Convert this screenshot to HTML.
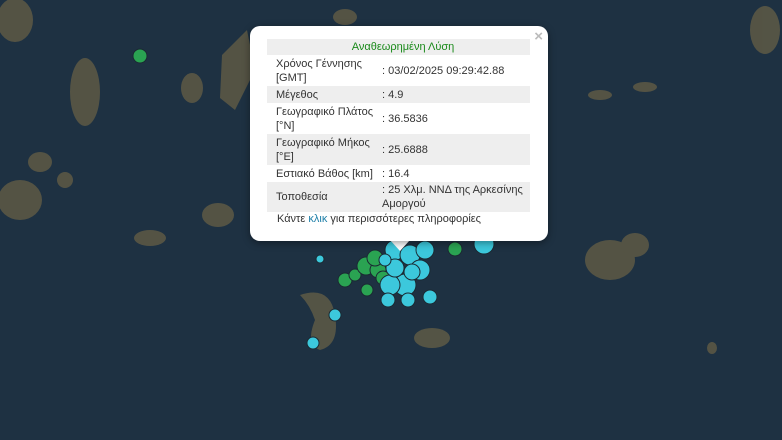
<!DOCTYPE html>
<html><head><meta charset="utf-8"><style>
body{margin:0;width:782px;height:440px;overflow:hidden;background:#1e3142;font-family:"Liberation Sans",sans-serif;position:relative}
svg{position:absolute;left:0;top:0}
.pop{position:absolute;left:250px;top:26px;width:298px;height:215px;background:#fff;border-radius:10px;box-shadow:0 2px 8px rgba(0,0,0,.4)}
.tip{position:absolute;left:390px;top:240px;width:0;height:0;border-left:10px solid transparent;border-right:10px solid transparent;border-top:11px solid #fff}
.x{position:absolute;right:5px;top:2px;color:#bbb;font-size:15px;font-weight:bold}
table{position:absolute;left:17px;top:13px;width:263px;border-collapse:collapse;font-size:11px;color:#333}
td{padding:0 0 0 9px;line-height:14px;vertical-align:middle}
td:first-child{width:98px}
td+td{padding-left:8px}
tr.g{background:#eee}
.h td{color:#1a8a1a;text-align:center;height:16px}
.lnk{position:absolute;left:27px;top:187px;font-size:11px;color:#333}
.lnk span{color:#1e7fa8}
</style></head><body>
<svg width="782" height="440">
<g fill="#5e5a45" opacity=".85">
<ellipse cx="85" cy="92" rx="15" ry="34"/><path d="M222 55 l25-25 l8 40 l-20 40 l-15-12z"/>
<ellipse cx="192" cy="88" rx="11" ry="15"/><ellipse cx="345" cy="17" rx="12" ry="8"/>
<ellipse cx="15" cy="20" rx="18" ry="22"/><ellipse cx="40" cy="162" rx="12" ry="10"/>
<ellipse cx="20" cy="200" rx="22" ry="20"/><ellipse cx="65" cy="180" rx="8" ry="8"/>
<ellipse cx="218" cy="215" rx="16" ry="12"/><ellipse cx="150" cy="238" rx="16" ry="8"/>
<ellipse cx="610" cy="260" rx="25" ry="20"/><ellipse cx="635" cy="245" rx="14" ry="12"/>
<ellipse cx="432" cy="338" rx="18" ry="10"/><ellipse cx="765" cy="30" rx="15" ry="24"/>
<ellipse cx="600" cy="95" rx="12" ry="5"/><ellipse cx="645" cy="87" rx="12" ry="5"/>
<path d="M300 295 q30-10 35 20 q5 30-15 35 q-15-5-5-30 q-5-15-15-25z"/><ellipse cx="712" cy="348" rx="5" ry="6"/>
</g>
<g stroke="#1b2a33" stroke-width="1">
<circle cx="140" cy="56" r="7" fill="#2aa352"/><circle cx="455" cy="249" r="7" fill="#2aa352"/>
<circle cx="484" cy="244" r="10" fill="#3cc8dc"/><circle cx="320" cy="259" r="4" fill="#3cc8dc"/>
<circle cx="345" cy="280" r="7" fill="#2aa352"/><circle cx="355" cy="275" r="6" fill="#2aa352"/>
<circle cx="367" cy="290" r="6" fill="#2aa352"/><circle cx="366" cy="266" r="9" fill="#2aa352"/>
<circle cx="378" cy="270" r="8" fill="#2aa352"/><circle cx="375" cy="258" r="8" fill="#2aa352"/>
<circle cx="383" cy="278" r="7" fill="#2aa352"/>
<circle cx="395" cy="250" r="10" fill="#3cc8dc"/><circle cx="410" cy="255" r="10" fill="#3cc8dc"/>
<circle cx="425" cy="250" r="9" fill="#3cc8dc"/><circle cx="420" cy="270" r="10" fill="#3cc8dc"/>
<circle cx="405" cy="285" r="11" fill="#3cc8dc"/><circle cx="390" cy="285" r="10" fill="#3cc8dc"/>
<circle cx="395" cy="268" r="9" fill="#3cc8dc"/><circle cx="388" cy="300" r="7" fill="#3cc8dc"/>
<circle cx="408" cy="300" r="7" fill="#3cc8dc"/><circle cx="430" cy="297" r="7" fill="#3cc8dc"/>
<circle cx="385" cy="260" r="6" fill="#3cc8dc"/><circle cx="335" cy="315" r="6" fill="#3cc8dc"/>
<circle cx="313" cy="343" r="6" fill="#3cc8dc"/><circle cx="412" cy="272" r="8" fill="#3cc8dc"/>
</g>
</svg>
<div class="tip"></div>
<div class="pop"><div class="x">×</div>
<table>
<tr class="g h"><td colspan="2">Αναθεωρημένη Λύση</td></tr>
<tr style="height:31px"><td>Χρόνος Γέννησης [GMT]</td><td>: 03/02/2025 09:29:42.88</td></tr>
<tr class="g" style="height:17px"><td>Μέγεθος</td><td>: 4.9</td></tr>
<tr style="height:31px"><td>Γεωγραφικό Πλάτος [°N]</td><td>: 36.5836</td></tr>
<tr class="g" style="height:31px"><td>Γεωγραφικό Μήκος [°E]</td><td>: 25.6888</td></tr>
<tr style="height:17px"><td>Εστιακό Βάθος [km]</td><td>: 16.4</td></tr>
<tr class="g" style="height:30px"><td>Τοποθεσία</td><td>: 25 Χλμ. ΝΝΔ της Αρκεσίνης Αμοργού</td></tr>
</table>
<div class="lnk">Κάντε <span>κλικ</span> για περισσότερες πληροφορίες</div>
</div>
</body></html>
